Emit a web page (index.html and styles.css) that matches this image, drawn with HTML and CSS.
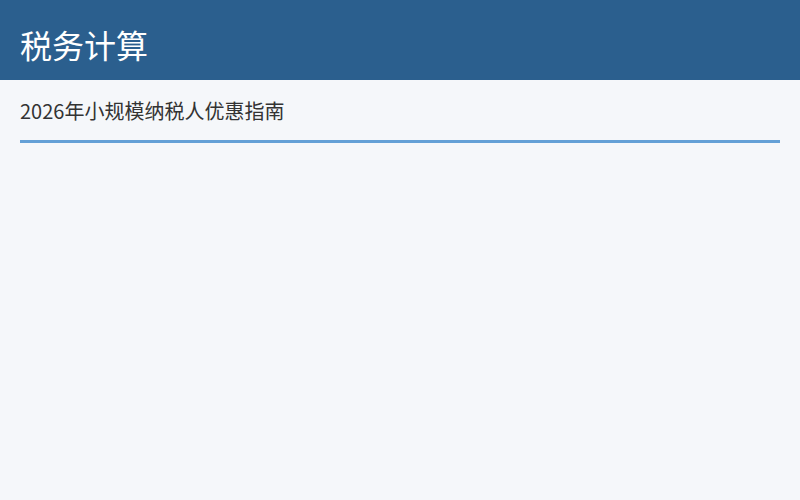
FILE: index.html
```html
<!DOCTYPE html>
<html>

<head>
  <meta charset="UTF-8">
  <title>税务计算</title>
  <link rel="stylesheet" href="styles.css">
</head>

<body>

  <div id="header">
    <h1>税务计算</h1>
  </div>

  <div id="content">
    <h2 class="sectionTitle">2026年小规模纳税人优惠指南</h2>
  </div>

</body>

</html>
```

FILE: styles.css
```css
:root {
  --tax-blue: #2b5f8e;
  --tax-line: #64a0d6;
}

body {
  background-color: #f5f7fa;
  color: #333;
  margin: 0;
  font-family: 'Noto Sans CJK SC', 'Noto Sans', sans-serif;
}

#header {
  background-color: var(--tax-blue);
  height: 80px;
  box-sizing: border-box;
  padding: 24px 20px 16px;
}

#header h1 {
  margin: 0;
  color: white;
  font-size: 32px;
  font-weight: 400;
  line-height: 40px;
}

#content {
  padding: 16px 20px;
}

.sectionTitle {
  margin: 0;
  padding-bottom: 14px;
  border-bottom: 3px solid var(--tax-line);
  font-size: 20px;
  font-weight: 400;
  line-height: 30px;
}
```
